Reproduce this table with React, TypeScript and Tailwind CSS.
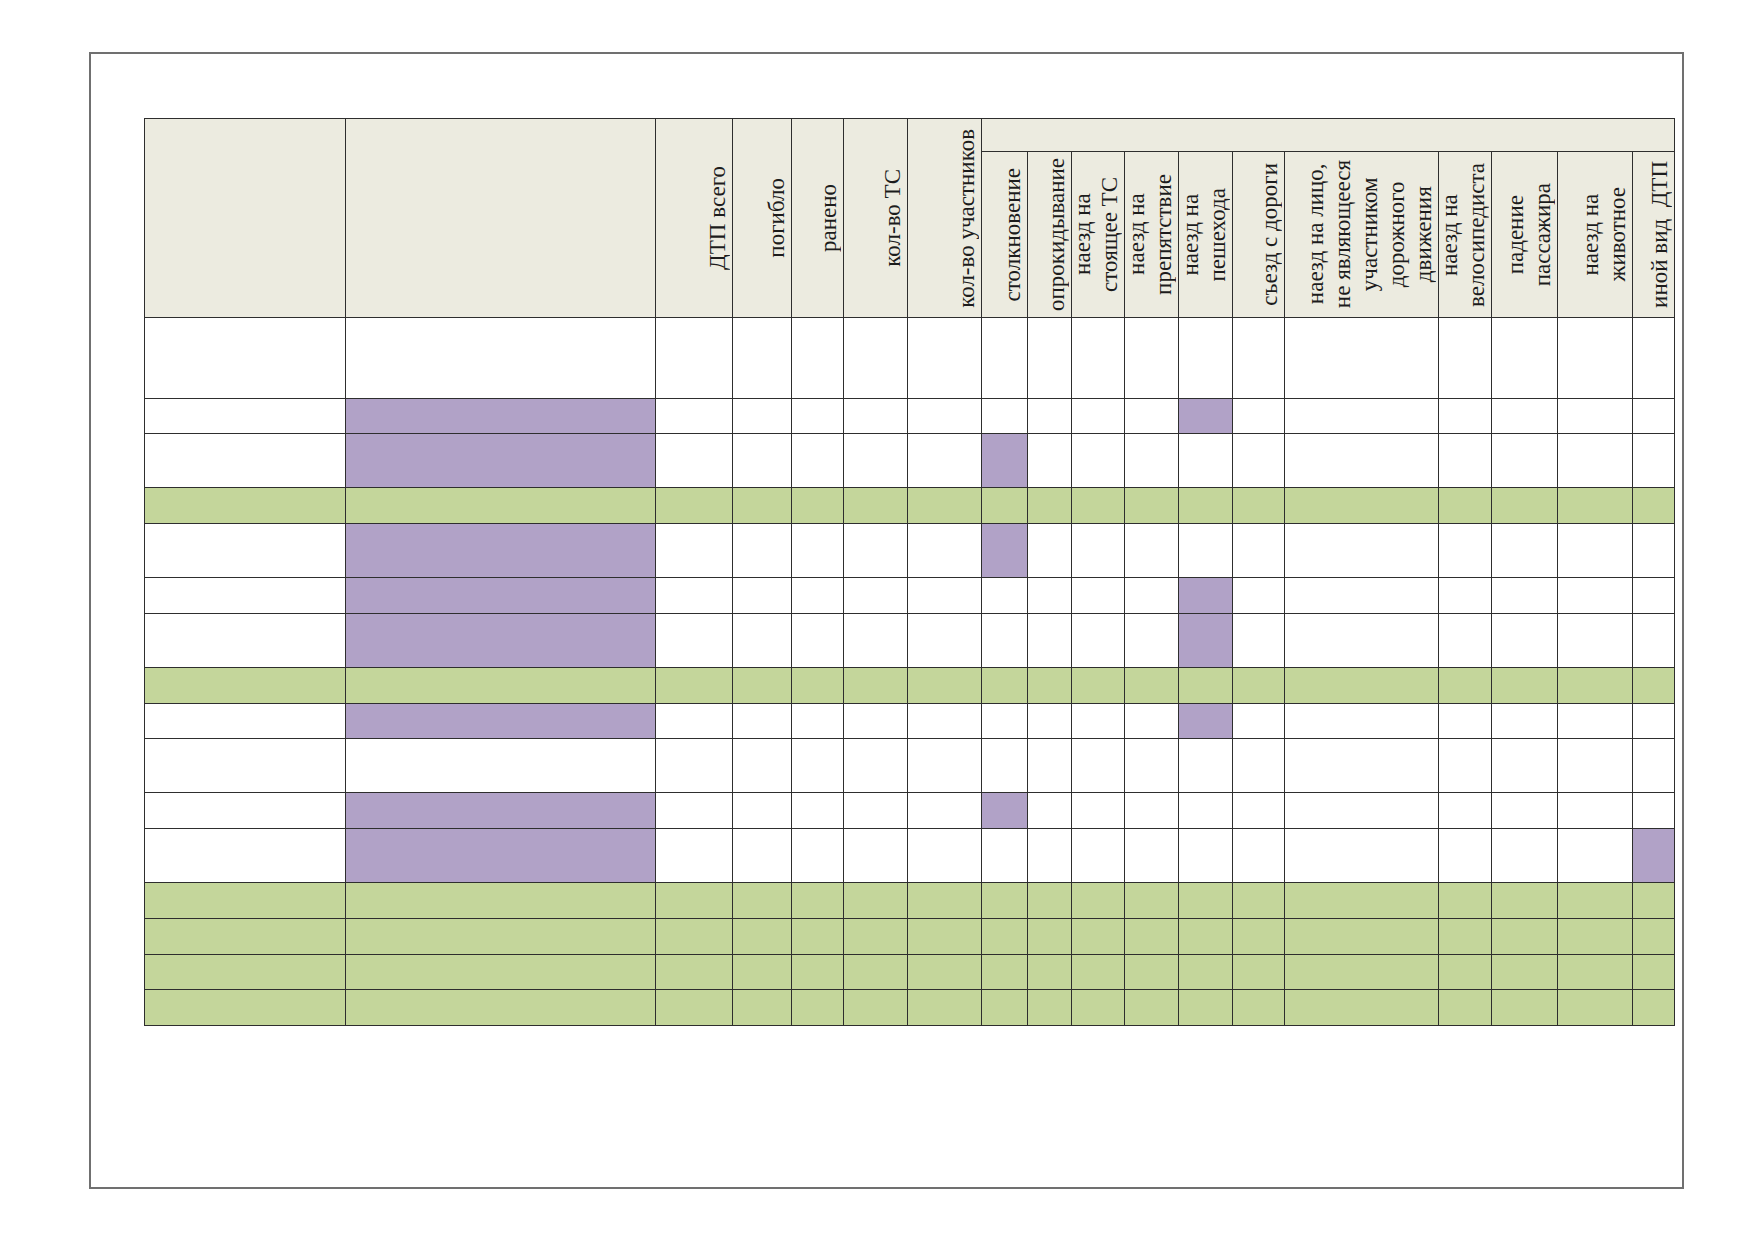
import React from 'react';

type RowKind = 'first' | 'tall' | 'short';

interface BodyRow {
  kind: RowKind;
  green?: boolean;
  purple?: number[];
}

// widths of the 18 columns, px
const colWidths = [
  'w-[201.5px]', 'w-[310px]', 'w-[77px]', 'w-[59px]', 'w-[52px]', 'w-[64px]',
  'w-[74px]', 'w-[46px]', 'w-[44px]', 'w-[53px]', 'w-[54px]', 'w-[53.5px]',
  'w-[52.5px]', 'w-[154px]', 'w-[53px]', 'w-[66px]', 'w-[75px]', 'w-[42px]',
];

const mainHeads: string[][] = [
  ['ДТП всего'],
  ['погибло'],
  ['ранено'],
  ['кол-во ТС'],
  ['кол-во участников'],
];

const typeHeads: string[][] = [
  ['столкновение'],
  ['опрокидывание'],
  ['наезд на', 'стоящее ТС'],
  ['наезд на', 'препятствие'],
  ['наезд на', 'пешехода'],
  ['съезд с дороги'],
  ['наезд на лицо,', 'не являющееся', 'участником', 'дорожного', 'движения'],
  ['наезд на', 'велосипедиста'],
  ['падение', 'пассажира'],
  ['наезд на', 'животное'],
  ['иной вид\u00a0\u00a0ДТП'],
];

const rows: BodyRow[] = [
  { kind: 'first' },
  { kind: 'short', purple: [1, 11] },
  { kind: 'tall', purple: [1, 7] },
  { kind: 'short', green: true },
  { kind: 'tall', purple: [1, 7] },
  { kind: 'short', purple: [1, 11] },
  { kind: 'tall', purple: [1, 11] },
  { kind: 'short', green: true },
  { kind: 'short', purple: [1, 11] },
  { kind: 'tall' },
  { kind: 'short', purple: [1, 7] },
  { kind: 'tall', purple: [1, 17] },
  { kind: 'short', green: true },
  { kind: 'short', green: true },
  { kind: 'short', green: true },
  { kind: 'short', green: true },
];

const rowHeight: Record<RowKind, string> = {
  first: 'h-[80.5px]',
  tall: 'h-[54px]',
  short: 'h-[35.75px]',
};

function VerticalLabel({ lines }: { lines: string[] }) {
  return (
    <div className="[writing-mode:vertical-rl] rotate-180 text-center whitespace-nowrap text-[23px] leading-[27px] font-normal text-[#1c1c1c]">
      {lines.map((line, i) => (
        <React.Fragment key={i}>
          {i > 0 && <br />}
          {line}
        </React.Fragment>
      ))}
    </div>
  );
}

export default function App() {
  const cellBorder = 'border border-[#2e2e2e]';

  return (
    <div className="w-[1752px] h-[1239px] bg-white pt-[52px] pl-[89px] font-['Liberation_Serif',serif]">
      <div className="w-[1595px] h-[1137px] border-2 border-[#707070] pl-[52.5px] pt-[64px]">
        <table className="table-fixed border-collapse w-[1530.5px]">
          <colgroup>
            {colWidths.map((w, i) => (
              <col key={i} className={w} />
            ))}
          </colgroup>
          <thead>
            <tr className="h-[33px]">
              <th rowSpan={2} className={`${cellBorder} bg-[#ecebe0] p-0`} />
              <th rowSpan={2} className={`${cellBorder} bg-[#ecebe0] p-0`} />
              {mainHeads.map((lines, i) => (
                <th key={i} rowSpan={2} className={`${cellBorder} bg-[#ecebe0] p-0`}>
                  <div className="h-[198px] flex items-center justify-end pr-[1px]">
                    <VerticalLabel lines={lines} />
                  </div>
                </th>
              ))}
              <th colSpan={11} className={`${cellBorder} bg-[#ecebe0] p-0`} />
            </tr>
            <tr className="h-[166px]">
              {typeHeads.map((lines, i) => (
                <th key={i} className={`${cellBorder} bg-[#ecebe0] p-0`}>
                  <div className="h-[165px] flex items-center justify-end pr-[1px]">
                    <VerticalLabel lines={lines} />
                  </div>
                </th>
              ))}
            </tr>
          </thead>
          <tbody>
            {rows.map((row, r) => (
              <tr key={r} className={rowHeight[row.kind]}>
                {colWidths.map((_, c) => {
                  const bg = row.green
                    ? 'bg-[#c4d69b]'
                    : row.purple?.includes(c)
                      ? 'bg-[#b1a2c7]'
                      : 'bg-white';
                  return <td key={c} className={`${cellBorder} ${bg} p-0`} />;
                })}
              </tr>
            ))}
          </tbody>
        </table>
      </div>
    </div>
  );
}
